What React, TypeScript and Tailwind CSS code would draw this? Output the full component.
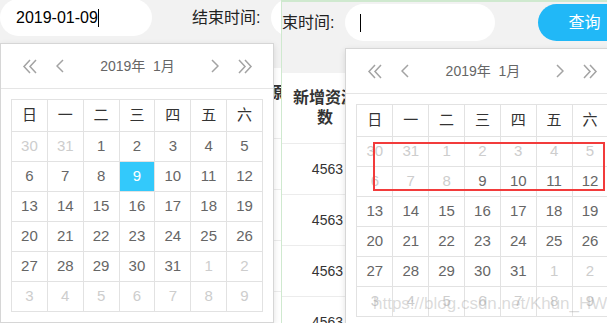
import React from 'react';

type Cell = { day: number; muted: boolean };

const WEEKDAYS = ['日', '一', '二', '三', '四', '五', '六'];

// January 2019 grid, as the picker draws it
const buildWeeks = (minDay: number): Cell[][] => {
  const days: Cell[] = [
    { day: 30, muted: true },
    { day: 31, muted: true },
  ];
  for (let d = 1; d <= 31; d++) days.push({ day: d, muted: d < minDay });
  for (let d = 1; d <= 9; d++) days.push({ day: d, muted: true });
  const weeks: Cell[][] = [];
  for (let i = 0; i < 6; i++) weeks.push(days.slice(i * 7, i * 7 + 7));
  return weeks;
};

const Chevron = ({ left, className = '' }: { left?: boolean; className?: string }) => (
  <svg width="8" height="14" viewBox="0 0 8 14" className={className} fill="none" stroke="#a3a3a3" strokeWidth="1.5">
    <path d={left ? 'M7 1 L1 7 L7 13' : 'M1 1 L7 7 L1 13'} />
  </svg>
);

const DoubleChevron = ({ left, className = '' }: { left?: boolean; className?: string }) => (
  <svg width="16" height="15" viewBox="0 0 16 15" className={className} fill="none" stroke="#a3a3a3" strokeWidth="1.5">
    {left ? (
      <>
        <path d="M8 1 L2 7.5 L8 14" />
        <path d="M14 1 L8 7.5 L14 14" />
      </>
    ) : (
      <>
        <path d="M2 1 L8 7.5 L2 14" />
        <path d="M8 1 L14 7.5 L8 14" />
      </>
    )}
  </svg>
);

const Calendar = ({ minDay = 0, selected }: { minDay?: number; selected?: number }) => {
  const weeks = buildWeeks(minDay);
  return (
    <div className="w-[274px] bg-white border border-[#d6d6d6] shadow-[0_2px_6px_rgba(0,0,0,0.12)]">
      <div className="h-[45px] border-b border-[#e5e5e5] flex items-center pl-[21px] pr-[20px]">
        <DoubleChevron left />
        <Chevron left className="ml-[18px]" />
        <div className="flex-1 text-center text-[14px] text-[#666]">2019年&nbsp;&nbsp;1月</div>
        <Chevron />
        <DoubleChevron className="ml-[18px]" />
      </div>
      <div className="p-[10px]">
        <table className="border-collapse table-fixed">
          <thead>
            <tr>
              {WEEKDAYS.map(w => (
                <th key={w} className="w-[36px] h-[32px] border border-[#e2e2e2] text-[15px] font-normal text-[#333]">
                  {w}
                </th>
              ))}
            </tr>
          </thead>
          <tbody>
            {weeks.map((week, wi) => (
              <tr key={wi}>
                {week.map((c, ci) => {
                  const isSel = !c.muted && c.day === selected && wi === 1;
                  return (
                    <td
                      key={ci}
                      className={
                        isSel
                          ? 'w-[36px] h-[30px] border border-[#e2e2e2] text-center text-[15px] bg-[#33c9fb] text-white'
                          : c.muted
                          ? 'w-[36px] h-[30px] border border-[#e2e2e2] text-center text-[15px] text-[#cdcdcd]'
                          : 'w-[36px] h-[30px] border border-[#e2e2e2] text-center text-[15px] text-[#666]'
                      }
                    >
                      {c.day}
                    </td>
                  );
                })}
              </tr>
            ))}
          </tbody>
        </table>
      </div>
    </div>
  );
};

const Cursor = () => <span className="inline-block w-px h-[18px] bg-black" />;

// the same query page, with either the start or the end picker open
const Page = ({ open }: { open: 'start' | 'end' }) => (
  <div className="w-[760px] bg-white">
    <div className="h-[69px] bg-[#f2f2f2]">
      <div className="flex items-center h-[37px]">
        <div className="relative">
          <div className="w-[152px] h-[37px] rounded-full bg-white flex items-center pl-[16px] text-[16px] text-black">
            {open === 'start' && (
              <>
                2019-01-09
                <Cursor />
              </>
            )}
          </div>
          {open === 'start' && (
            <div className="absolute left-0 top-[44px] z-10">
              <Calendar selected={9} />
            </div>
          )}
        </div>
        <span className="ml-[40px] text-[16px] text-[#222]">结束时间:</span>
        <div className="relative ml-[11px]">
          <div className="w-[150px] h-[37px] rounded-full bg-white flex items-center pl-[15px]">
            {open === 'end' && <Cursor />}
          </div>
          {open === 'end' && (
            <div className="absolute left-0 top-[44px] z-10">
              <Calendar minDay={9} />
              <div className="absolute left-[28px] top-[94px] w-[232px] h-[49px] border-2 border-[#f23b3b]" />
            </div>
          )}
        </div>
        <button className="ml-[43px] w-[92px] h-[37px] rounded-full bg-[#21b8f7] text-white text-[16px]">查询</button>
      </div>
    </div>
    <div className="flex h-[71px] border-b border-[#ececec]">
      <div className="w-[206px]" />
      <div className="w-[90px] px-[10px] flex items-center justify-center text-center text-[16px] leading-[20px] font-bold text-[#333]">
        新增资源数
      </div>
    </div>
    {[0, 1, 2, 3].map(i => (
      <div key={i} className="flex h-[51px] border-b border-[#ececec]">
        <div className="w-[206px]" />
        <div className="w-[90px] pr-[27px] flex items-center justify-end text-[14px] text-[#333]">4563</div>
      </div>
    ))}
  </div>
);

export default function App() {
  return (
    <div className="w-[607px] h-[323px] overflow-hidden flex bg-white font-['Liberation_Sans','Noto_Sans_CJK_SC',sans-serif]">
      <div className="w-[281px] shrink-0 overflow-hidden">
        <div className="-mt-px">
          <Page open="start" />
        </div>
      </div>
      <div className="relative flex-1 overflow-hidden border-l border-t-2 border-[#cfe9cf] bg-[#f2f2f2]">
        <div className="-ml-[208px] mt-[2px]">
          <Page open="end" />
        </div>
        <div className="absolute left-[91px] top-[289px] z-20 text-[17px] text-[rgba(150,150,150,0.35)] whitespace-nowrap">
          https://blog.csdn.net/Khun_HW9
        </div>
      </div>
    </div>
  );
}
